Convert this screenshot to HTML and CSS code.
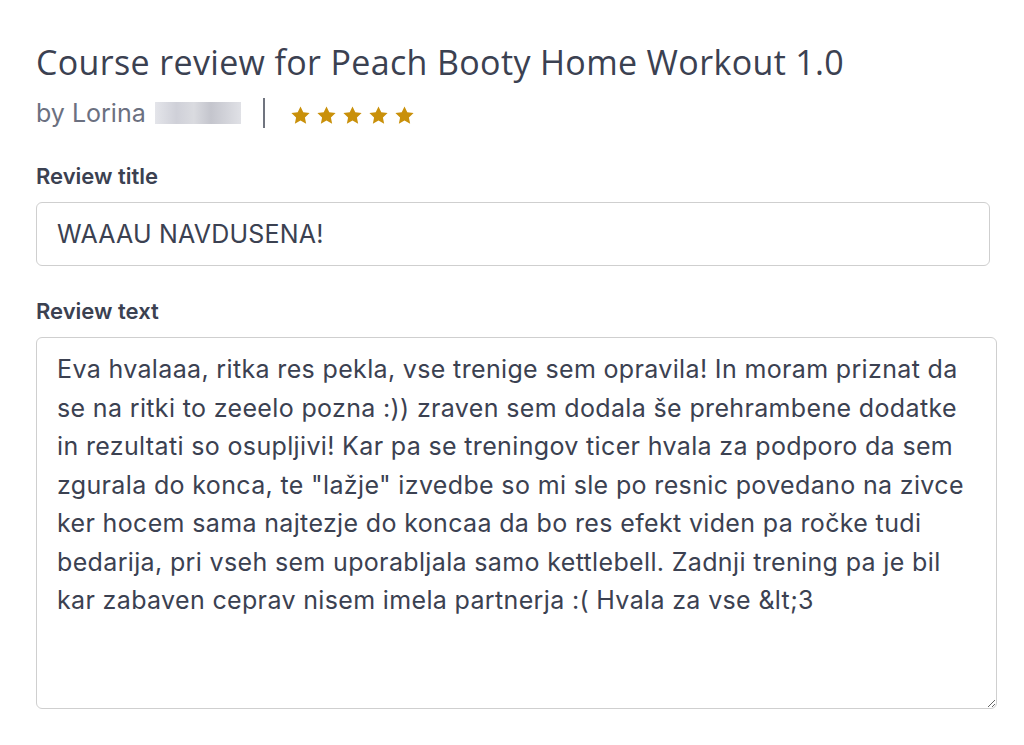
FILE: index.html
```html
<!DOCTYPE html>
<html lang="sl">
<head>
  <meta charset="UTF-8">
  <title>Course review</title>
  <link rel="stylesheet" href="styles.css">
</head>
<body>
  <div class="review-form">
    <h1 class="review-heading">Course review for Peach Booty Home Workout 1.0</h1>
    <div class="review-meta">
      <span class="author">by Lorina <span class="blurred"></span></span>
      <span class="divider"></span>
      <span class="stars">
        <svg viewBox="0 0 24 24"><path d="M12 2.5l2.9 6.1 6.6.8-4.9 4.6 1.3 6.6L12 17.3l-5.9 3.3 1.3-6.6-4.9-4.6 6.6-.8z"/></svg>
        <svg viewBox="0 0 24 24"><path d="M12 2.5l2.9 6.1 6.6.8-4.9 4.6 1.3 6.6L12 17.3l-5.9 3.3 1.3-6.6-4.9-4.6 6.6-.8z"/></svg>
        <svg viewBox="0 0 24 24"><path d="M12 2.5l2.9 6.1 6.6.8-4.9 4.6 1.3 6.6L12 17.3l-5.9 3.3 1.3-6.6-4.9-4.6 6.6-.8z"/></svg>
        <svg viewBox="0 0 24 24"><path d="M12 2.5l2.9 6.1 6.6.8-4.9 4.6 1.3 6.6L12 17.3l-5.9 3.3 1.3-6.6-4.9-4.6 6.6-.8z"/></svg>
        <svg viewBox="0 0 24 24"><path d="M12 2.5l2.9 6.1 6.6.8-4.9 4.6 1.3 6.6L12 17.3l-5.9 3.3 1.3-6.6-4.9-4.6 6.6-.8z"/></svg>
      </span>
    </div>

    <label class="field-label" for="reviewTitle">Review title</label>
    <input class="title-input" id="reviewTitle" type="text" value="WAAAU NAVDUSENA!">

    <label class="field-label" for="reviewText">Review text</label>
    <textarea class="text-input" id="reviewText">Eva hvalaaa, ritka res pekla, vse trenige sem opravila! In moram priznat da
se na ritki to zeeelo pozna :)) zraven sem dodala še prehrambene dodatke
in rezultati so osupljivi! Kar pa se treningov ticer hvala za podporo da sem
zgurala do konca, te "lažje" izvedbe so mi sle po resnic povedano na zivce
ker hocem sama najtezje do koncaa da bo res efekt viden pa ročke tudi
bedarija, pri vseh sem uporabljala samo kettlebell. Zadnji trening pa je bil
kar zabaven ceprav nisem imela partnerja :( Hvala za vse &amp;lt;3</textarea>
    <div class="next-label">Ocena</div>
  </div>
</body>
</html>
```

FILE: styles.css
```css
body {
  margin: 0;
  background: #fff;
  font-family: Inter, "Noto Sans", sans-serif;
  color: #3b4151;
}
.review-form {
  padding: 42px 28px 0 36px;
  display: flex;
  flex-direction: column;
  align-items: flex-start;
}
.review-heading {
  font-family: "Open Sans", sans-serif;
  font-weight: 400;
  font-size: 34px;
  letter-spacing: 0.35px;
  line-height: 40px;
  margin: 0;
  color: #3b4151;
}
.review-meta {
  display: flex;
  align-items: center;
  margin-top: 14px;
  height: 34px;
}
.author {
  font-size: 25px;
  color: #6b7080;
  display: flex;
  align-items: center;
  gap: 9px;
}
.blurred {
  display: inline-block;
  width: 86px;
  height: 22px;
  background: linear-gradient(90deg, #e4e5ea 0%, #cfd0d8 25%, #dadbe0 45%, #c4c5cd 65%, #e0e1e6 100%);
}
.divider {
  width: 2px;
  height: 30px;
  background: #70747f;
  margin: 0 24px 0 22px;
}
.stars {
  display: flex;
  gap: 3px;
  padding-top: 4px;
}
.stars svg {
  width: 23px;
  height: 23px;
  fill: #c9900a;
}
.field-label {
  font-size: 22px;
  font-weight: 600;
  color: #3b4151;
  margin-top: 33px;
  margin-bottom: 13px;
}
.title-input {
  box-sizing: border-box;
  width: 954px;
  height: 64px;
  margin-bottom: -1px;
  border: 1px solid #cfcfcf;
  border-radius: 6px;
  padding: 0 20px;
  font-family: Inter, sans-serif;
  font-size: 25px;
  letter-spacing: 0.2px;
  color: #3b4151;
}
.text-input {
  box-sizing: border-box;
  width: 961px;
  height: 372px;
  border: 1px solid #cfcfcf;
  border-radius: 6px;
  padding: 12px 20px;
  font-family: Inter, sans-serif;
  font-size: 25px;
  letter-spacing: 0.35px;
  line-height: 38.5px;
  color: #3b4151;
  white-space: pre;
  overflow: hidden;
  resize: both;
}
.next-label {
  font-size: 22px;
  font-weight: 600;
  margin-top: 32px;
}
```
